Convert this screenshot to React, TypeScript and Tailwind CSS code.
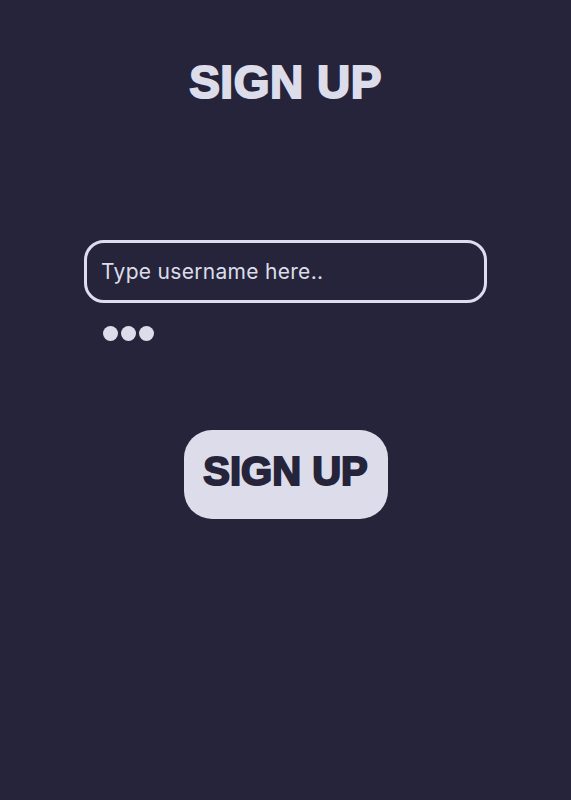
import React from 'react';

export default function App() {
  return (
    <div className="min-h-[800px] w-full bg-[#25243a] flex flex-col items-center">
      <h1 className="mt-[56px] text-[46px] leading-[52px] font-bold text-[#dcdcea] [font-family:'Liberation_Sans',Arial,sans-serif] [-webkit-text-stroke:2px_#dcdcea] tracking-[0.5px]">
        SIGN UP
      </h1>

      <div className="mt-[132px] w-[403px] flex flex-col">
        <input
          type="text"
          placeholder="Type username here.."
          className="h-[63px] w-full rounded-[20px] border-[3px] border-[#e0dcef] bg-transparent px-[14px] text-[21px] tracking-[0.3px] text-[#dcdcea] placeholder:text-[#dcdcea] outline-none [font-family:Inter,sans-serif]"
        />
        <div className="mt-[23px] ml-[19px] flex gap-[3px]">
          <div className="w-[15px] h-[15px] rounded-full bg-[#dcdcea]" />
          <div className="w-[15px] h-[15px] rounded-full bg-[#dcdcea]" />
          <div className="w-[15px] h-[15px] rounded-full bg-[#dcdcea]" />
        </div>
      </div>

      <button className="mt-[89px] w-[204px] h-[89px] pb-[7px] rounded-[28px] bg-[#dcdcea] text-[#25243a] text-[40px] font-bold [font-family:'Liberation_Sans',Arial,sans-serif] [-webkit-text-stroke:2px_#25243a]">
        SIGN UP
      </button>
    </div>
  );
}
